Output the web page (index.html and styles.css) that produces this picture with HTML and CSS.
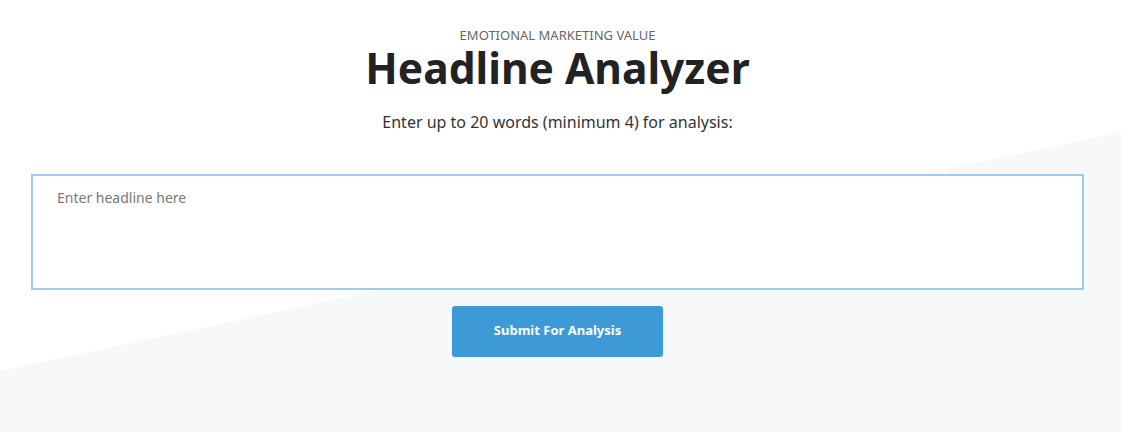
FILE: index.html
```html
<!DOCTYPE html>
<html>
<head>
<meta charset="utf-8"/>
<link rel="stylesheet" href="styles.css">
<title>Headline Analyzer</title>
</head>
<body>
<div class="Page">
  <div class="Wrap">
    <div class="Kicker">EMOTIONAL MARKETING VALUE</div>
    <h1 class="Title">Headline Analyzer</h1>
    <p class="Intro">Enter up to 20 words (minimum 4) for analysis:</p>
    <textarea class="HeadlineBox" placeholder="Enter headline here"></textarea>
    <button class="SubmitBtn">Submit For Analysis</button>
  </div>
</div>
</body>
</html>
```

FILE: styles.css
```css
body {
  margin: 0;
  background-color: #ffffff;
  font-family: "Noto Sans", "Open Sans", sans-serif;
  color: #222222;
}

.Page {
  position: relative;
  height: 432px;
  overflow: hidden;
}

/* slanted grey band behind the form */
.Page::before {
  content: "";
  position: absolute;
  left: 0;
  top: 0;
  right: 0;
  bottom: 0;
  background-color: #f7f8fa;
  clip-path: polygon(0 371px, 100% 132px, 100% 100%, 0 100%);
}

.Wrap {
  position: relative;
  width: 1053px;
  margin-left: 31px;
  padding-top: 27px;
  display: flex;
  flex-direction: column;
  align-items: center;
}

.Kicker {
  font-size: 13px;
  color: #666666;
  line-height: 16px;
}

.Title {
  margin: 1px 0 0 0;
  font-size: 42.5px;
  font-weight: 700;
  line-height: 48px;
  color: #222222;
}

.Intro {
  margin: 19px 0 0 0;
  font-size: 16px;
  line-height: 22px;
  color: #333333;
}

.HeadlineBox {
  box-sizing: border-box;
  width: 100%;
  height: 116px;
  margin-top: 41px;
  padding: 12px 24px;
  border: 2px solid #9dcdeb;
  background-color: #ffffff;
  font-family: "Noto Sans", "Open Sans", sans-serif;
  font-size: 14px;
  resize: none;
  outline: none;
}

.HeadlineBox::placeholder {
  color: #777777;
}

.SubmitBtn {
  margin-top: 16px;
  width: 211px;
  height: 51px;
  padding-bottom: 5px;
  border: none;
  border-radius: 3px;
  background-color: #3d9ad7;
  color: #ffffff;
  font-family: "Noto Sans", "Open Sans", sans-serif;
  font-size: 13px;
  font-weight: 700;
}
```
